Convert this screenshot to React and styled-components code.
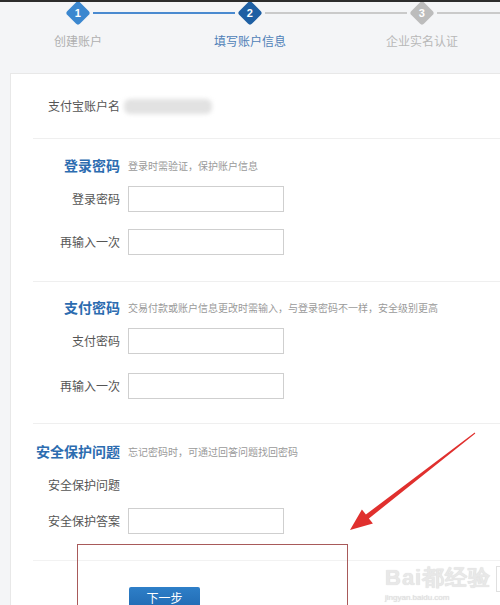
import React from "react";
import styled, { createGlobalStyle } from "styled-components";

const GlobalStyle = createGlobalStyle`
	body {
		margin: 0;
		background: #f4f5f7;
		font-family: "Noto Sans CJK SC", "Noto Sans", sans-serif;
	}
`;

const Page = styled.div`
	position: relative;
	width: 500px;
	height: 605px;
	overflow: hidden;
	background: #f4f5f7;
`;

const TopStrip = styled.div`
	height: 2px;
	background: #2d2d2d;
	position: relative;
	z-index: 2;
`;

const Steps = styled.div`
	display: grid;
	grid-template-columns: repeat(3, 172px);
	margin-left: -8px;
	padding-top: 1px;
`;

const Step = styled.div`
	display: flex;
	flex-direction: column;
	align-items: center;
`;

const Track = styled.div`
	display: flex;
	align-items: center;
	width: 100%;
	height: 20px;
	gap: 6px;
`;

const Line = styled.div`
	flex: 1;
	height: 2px;
	background: ${props => props.color || "transparent"};
`;

const Diamond = styled.div`
	width: 18px;
	height: 18px;
	border-radius: 3px;
	transform: rotate(45deg);
	background: ${props => props.color};
	display: flex;
	align-items: center;
	justify-content: center;
	flex: none;

	span {
		transform: rotate(-45deg);
		color: #fff;
		font-size: 11px;
		font-weight: bold;
		font-family: "Liberation Sans", sans-serif;
		line-height: 1;
	}
`;

const StepLabel = styled.div`
	margin-top: 10px;
	font-size: 12px;
	line-height: 16px;
	color: ${props => props.color};
`;

const Card = styled.div`
	margin: 24px 0 0 10px;
	width: 520px;
	background: #fff;
	border: 1px solid #e8e8e8;
	padding-top: 23px;
`;

const AccountRow = styled.div`
	display: flex;
	align-items: center;
	height: 18px;
	gap: 4px;
`;

const LabelCol = styled.div`
	width: 109px;
	flex: none;
	text-align: right;
	font-size: 12px;
	line-height: 18px;
	color: #555;
`;

const Blurred = styled.div`
	width: 88px;
	height: 15px;
	border-radius: 6px;
	background: #e2e2e2;
	filter: blur(2px);
`;

const Section = styled.div`
	margin: ${props => props.top || 0}px 0 0 22px;
	border-top: 1px solid #efefef;
	padding-top: ${props => props.pad || 16}px;
`;

const Heading = styled.div`
	display: flex;
	align-items: center;
	height: 20px;
	margin-left: -22px;
`;

const HeadTitle = styled.div`
	width: 109px;
	flex: none;
	text-align: right;
	font-size: 14px;
	font-weight: bold;
	color: #2c6cb0;
	line-height: 20px;
	white-space: nowrap;
`;

const HeadNote = styled.div`
	margin-left: 8px;
	font-size: 10px;
	color: #9a9a9a;
	white-space: nowrap;
`;

const Fields = styled.div`
	display: flex;
	flex-direction: column;
	gap: ${props => props.gap}px;
	margin: 11px 0 0 -22px;
`;

const Field = styled.div`
	display: flex;
	align-items: center;
	gap: 8px;
	height: 26px;
`;

const Input = styled.div`
	width: 154px;
	height: 24px;
	border: 1px solid #cfcfcf;
	background: #fff;
`;

const Footer = styled.div`
	margin: 26px 0 0 22px;
	border-top: 1px solid #f2f2f2;
	padding: 26px 0 0 96px;
`;

const Button = styled.div`
	width: 71px;
	height: 30px;
	background: linear-gradient(#2e7fc8, #1b62aa);
	color: #fff;
	font-size: 12px;
	line-height: 22px;
	text-align: center;
	border-radius: 2px;
`;

const Highlight = styled.div`
	position: absolute;
	left: 77px;
	top: 544px;
	width: 269px;
	height: 80px;
	border: 1px solid #a85a5a;
`;

const Overlay = styled.svg`
	position: absolute;
	left: 0;
	top: 0;
`;

const Watermark = styled.div`
	position: absolute;
	left: 385px;
	top: 563px;
	color: #e8e8e8;
	font-family: "Liberation Sans", sans-serif;
	text-shadow: 0 0 1px #d4d4d4;

	b {
		font-size: 22px;
		font-weight: bold;
		letter-spacing: 1px;
	}

	small {
		display: block;
		font-size: 8px;
		color: #e2e2e2;
	}
`;

const WaterBox = styled.div`
	position: absolute;
	left: 496px;
	top: 566px;
	width: 10px;
	height: 24px;
	border: 1px solid #e0e0e0;
`;

const steps = [
	{ n: 1, label: "创建账户", color: "#3b87cf", text: "#b0b0b0", left: null, right: "#4a8ad0" },
	{ n: 2, label: "填写账户信息", color: "#1e5fa3", text: "#4f7fb8", left: "#4a8ad0", right: "#cacaca" },
	{ n: 3, label: "企业实名认证", color: "#bcbcbc", text: "#b8b8b8", left: "#cacaca", right: "#cacaca" }
];

const App = () => {
	return (
		<Page>
			<GlobalStyle />
			<TopStrip />
			<Steps>
				{steps.map(s => (
					<Step key={s.n}>
						<Track>
							<Line color={s.left} />
							<Diamond color={s.color}>
								<span>{s.n}</span>
							</Diamond>
							<Line color={s.right} />
						</Track>
						<StepLabel color={s.text}>{s.label}</StepLabel>
					</Step>
				))}
			</Steps>

			<Card>
				<AccountRow>
					<LabelCol>支付宝账户名</LabelCol>
					<Blurred />
				</AccountRow>

				<Section top={23} pad={16}>
					<Heading>
						<HeadTitle>登录密码</HeadTitle>
						<HeadNote>登录时需验证，保护账户信息</HeadNote>
					</Heading>
					<Fields gap={17}>
						<Field>
							<LabelCol>登录密码</LabelCol>
							<Input />
						</Field>
						<Field>
							<LabelCol>再输入一次</LabelCol>
							<Input />
						</Field>
					</Fields>
				</Section>

				<Section top={26} pad={15}>
					<Heading>
						<HeadTitle>支付密码</HeadTitle>
						<HeadNote>交易付款或账户信息更改时需输入，与登录密码不一样，安全级别更高</HeadNote>
					</Heading>
					<Fields gap={19}>
						<Field>
							<LabelCol>支付密码</LabelCol>
							<Input />
						</Field>
						<Field>
							<LabelCol>再输入一次</LabelCol>
							<Input />
						</Field>
					</Fields>
				</Section>

				<Section top={24} pad={17}>
					<Heading>
						<HeadTitle>安全保护问题</HeadTitle>
						<HeadNote>忘记密码时，可通过回答问题找回密码</HeadNote>
					</Heading>
					<Fields gap={10}>
						<Field>
							<LabelCol>安全保护问题</LabelCol>
						</Field>
						<Field>
							<LabelCol>安全保护答案</LabelCol>
							<Input />
						</Field>
					</Fields>
				</Section>

				<Footer>
					<Button>下一步</Button>
				</Footer>
			</Card>

			<Highlight />
			<Watermark>
				<b>Bai都经验</b>
				<small>jingyan.baidu.com</small>
			</Watermark>
			<WaterBox />
			<Overlay width="500" height="605" viewBox="0 0 500 605">
				<polygon
					points="475.3,433.4 368.9,518.5 372.9,523.6 350,530 361.9,509.4 365.9,514.5 474.7,432.6"
					fill="#e0302e"
				/>
			</Overlay>
		</Page>
	);
};

export default App;
